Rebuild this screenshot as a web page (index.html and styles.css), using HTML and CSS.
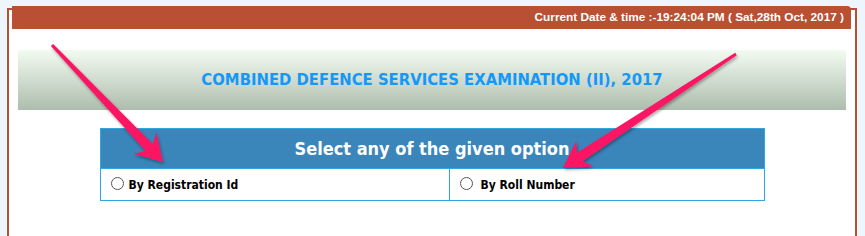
FILE: index.html
```html
<!DOCTYPE html>
<html lang="en">
<head>
    <meta charset="UTF-8">
    <title>Combined Defence Services Examination (II), 2017</title>
    <link rel="stylesheet" href="styles.css">
</head>
<body>

    <div class="page">
        <!-- Top bar -->
        <div class="topbar">Current Date &amp; time :-19:24:04 PM ( Sat,28th Oct, 2017 )</div>

        <!-- Exam title -->
        <div class="title">COMBINED DEFENCE SERVICES EXAMINATION (II), 2017</div>

        <!-- Option chooser -->
        <div class="options">
            <div class="options-head">Select any of the given option</div>
            <div class="options-row">
                <label class="opt"><input type="radio" name="mode"> By Registration Id</label>
                <label class="opt"><input type="radio" name="mode"> By Roll Number</label>
            </div>
        </div>
    </div>

    <!-- Annotation arrows -->
    <svg class="arrows" width="865" height="236" viewBox="0 0 865 236">
        <defs>
            <filter id="shadow" x="-20%" y="-20%" width="140%" height="140%">
                <feDropShadow dx="1" dy="2" stdDeviation="1.5" flood-color="#000" flood-opacity="0.35"/>
            </filter>
        </defs>
        <polygon filter="url(#shadow)" fill="#fa1463"
            points="50.9,46 145.6,151 133.8,153.8 163,162 156.4,132.4 152.8,144.1 53.1,44"/>
        <polygon filter="url(#shadow)" fill="#fa1463"
            points="735.2,52.7 577,152.8 576.3,140.9 563,168 593.1,166.5 582.5,161.2 736.8,55.3"/>
    </svg>

</body>
</html>
```

FILE: styles.css
```css
* {
    margin: 0;
    padding: 0;
    box-sizing: border-box;
}
body {
    background-color: #eef6fd;
    font-family: Tahoma, "DejaVu Sans Condensed", "DejaVu Sans", sans-serif;
    height: 236px;
    overflow: hidden;
    position: relative;
}
.page {
    margin: 8px 8px 0 7px;
    border: 2px solid #b94f33;
    border-bottom: none;
    background: #fff;
    height: 228px;
}
.topbar {
    margin: -4px 4px 0 3px;
    height: 23px;
    line-height: 23px;
    background: #b94f33;
    border-radius: 0 4px 0 0;
    color: #fff;
    font-family: "Liberation Sans", Arial, sans-serif;
    font-weight: bold;
    font-size: 11.8px;
    text-align: right;
    padding-right: 7px;
}
.title {
    margin: 21px 9px 0 9px;
    height: 60px;
    line-height: 60px;
    background: linear-gradient(#f3fbf1, #adbdad);
    color: #1598f7;
    font-weight: bold;
    font-size: 16.5px;
    text-align: center;
}
.options {
    width: 665px;
    margin: 18px auto 0 auto;
    border: 1px solid #2ea6e2;
}
.options-head {
    height: 39px;
    line-height: 39px;
    background: #3a85ba;
    color: #fff;
    font-weight: bold;
    font-size: 18px;
    text-align: center;
}
.options-row {
    display: grid;
    grid-template-columns: 348px 1fr;
    border-top: 1px solid #2ea6e2;
    height: 32px;
}
.opt {
    display: flex;
    align-items: center;
    gap: 5px;
    padding-left: 10px;
    font-weight: bold;
    font-size: 12px;
    color: #000;
}
.opt + .opt {
    border-left: 1px solid #2ea6e2;
}
.opt + .opt input {
    margin-right: 3px;
}
.opt input {
    appearance: none;
    width: 13px;
    height: 13px;
    border: 1px solid #555;
    border-radius: 50%;
    background: #fff;
    margin-top: -2px;
}
.arrows {
    position: absolute;
    left: 0;
    top: 0;
    pointer-events: none;
}
```
